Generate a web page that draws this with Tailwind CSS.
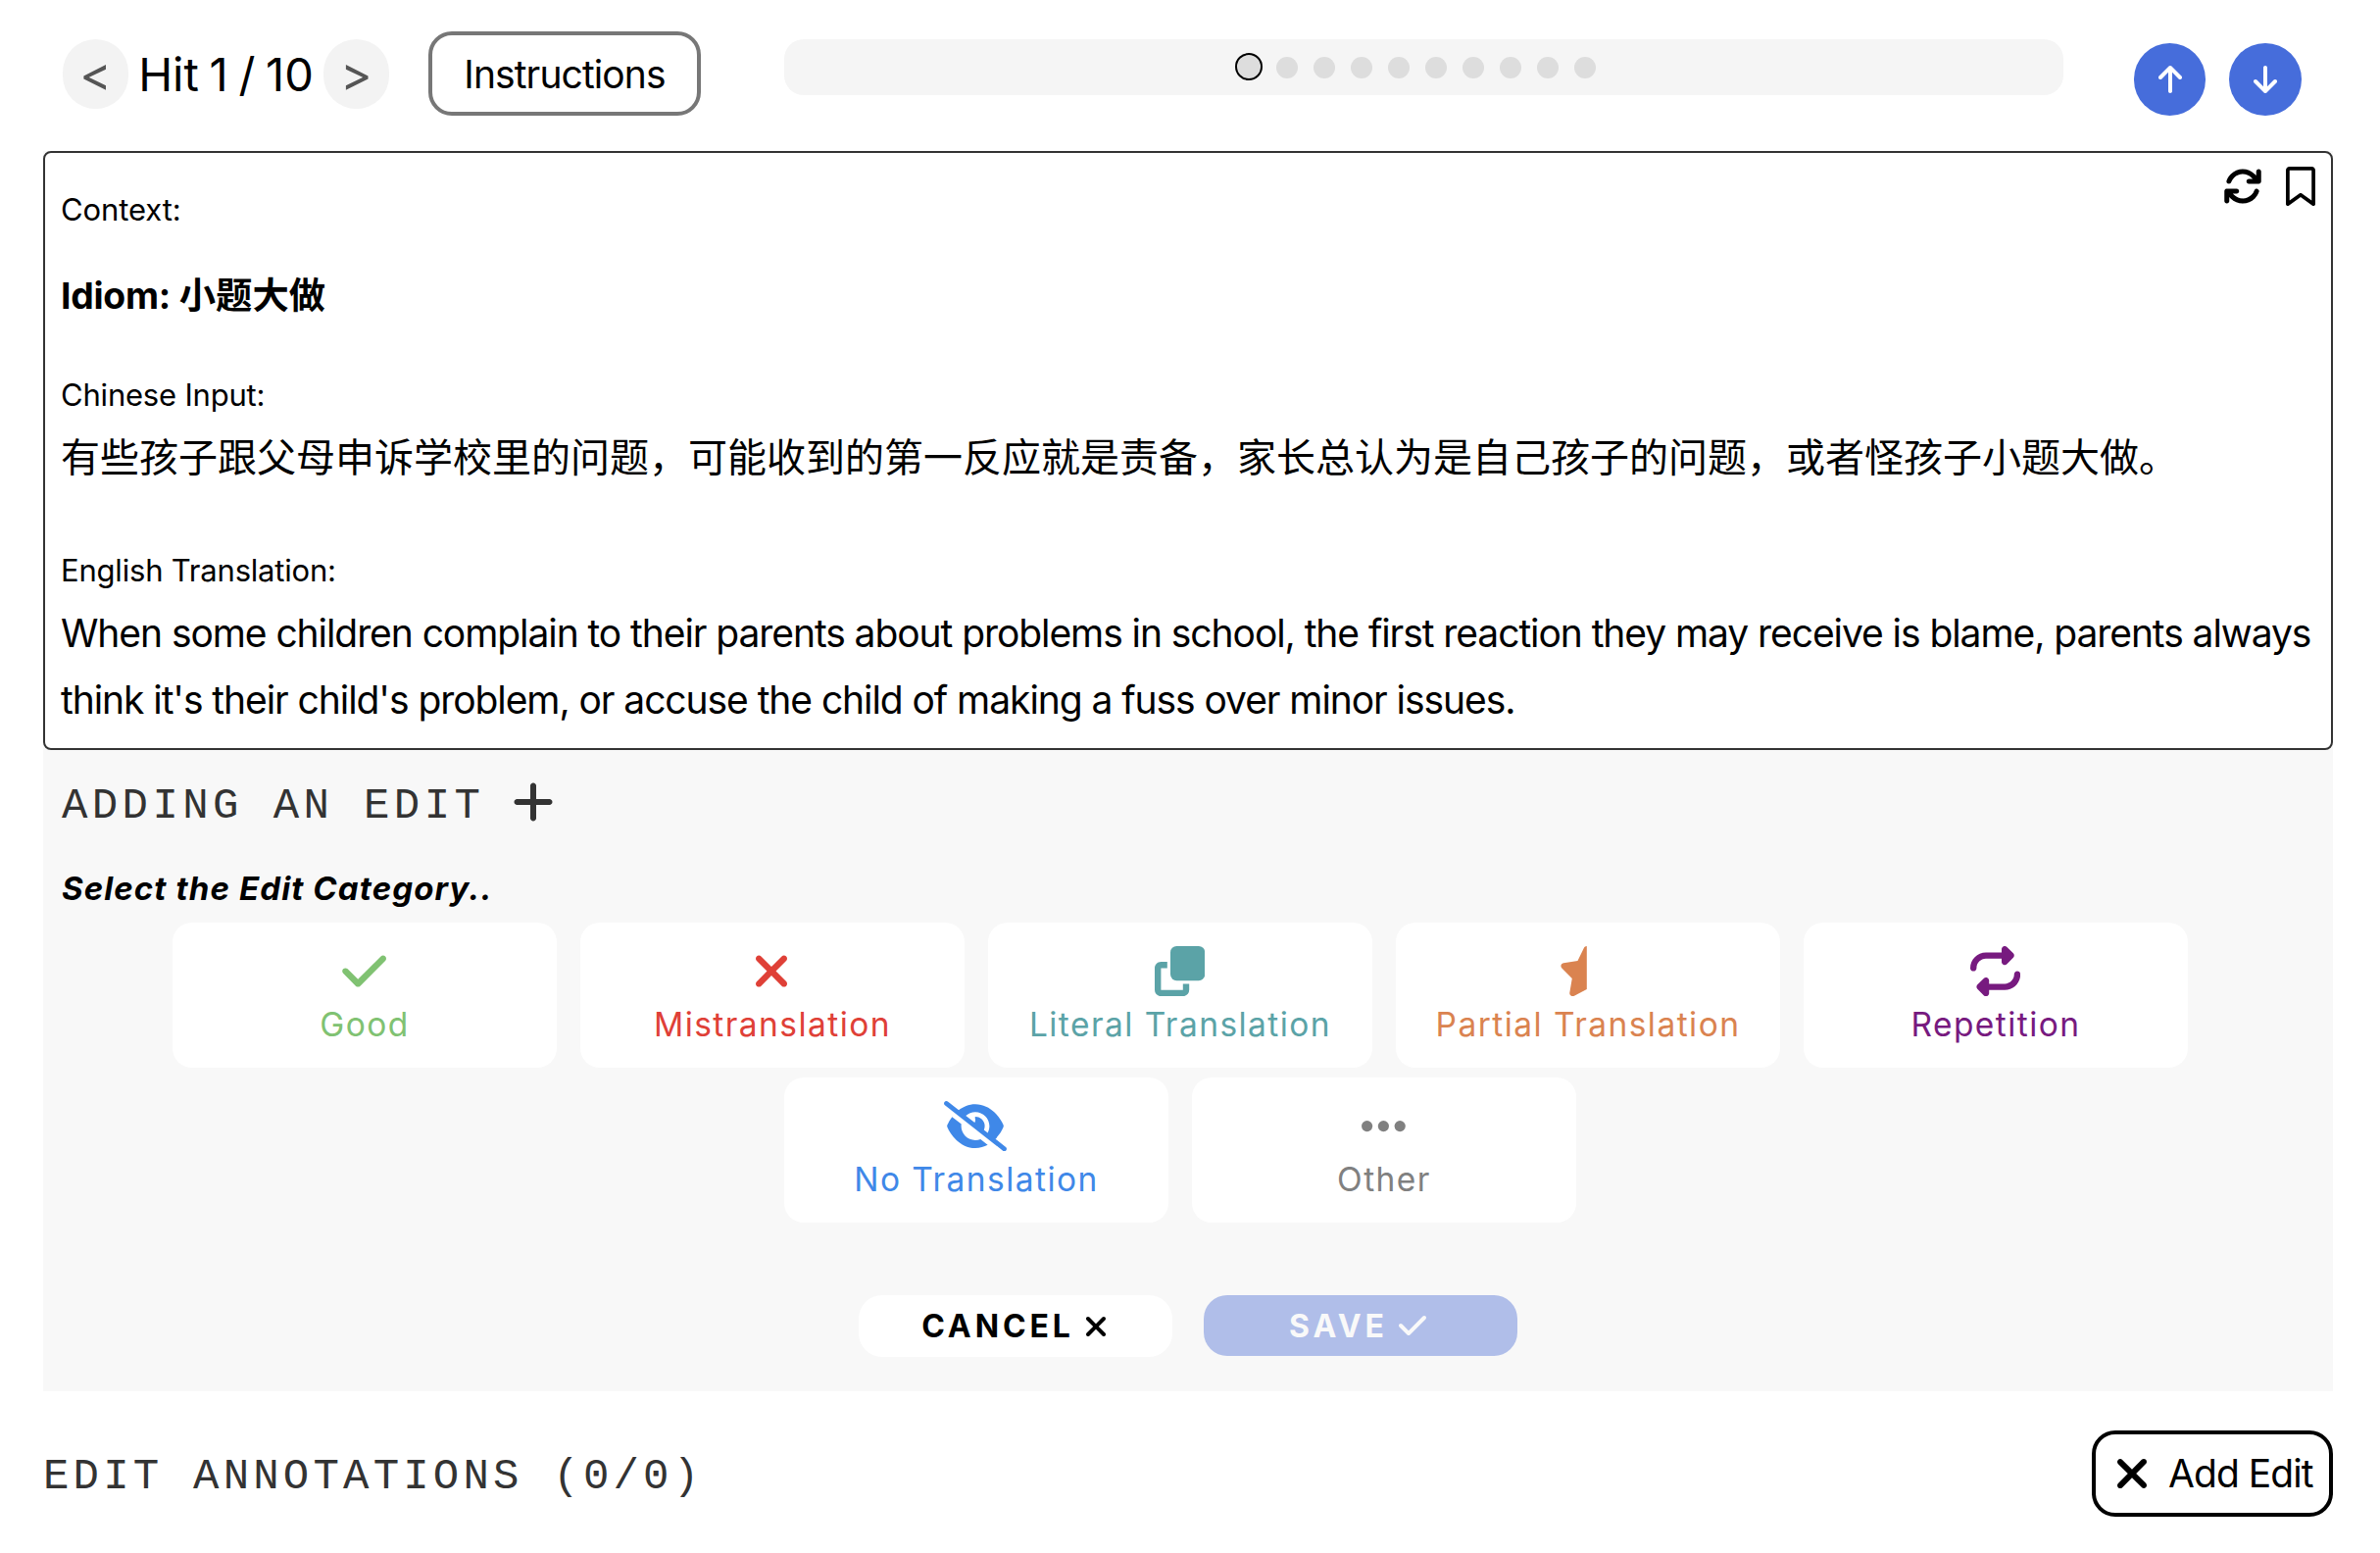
<!DOCTYPE html>
<html lang="en">
<head>
<meta charset="utf-8">
<title>Annotation</title>
<script src="https://cdn.jsdelivr.net/npm/@tailwindcss/browser@4"></script>
</head>
<body class="bg-white text-black font-['Inter','Noto_Sans_CJK_SC',sans-serif]">
<div class="w-[2428px] h-[1584px] overflow-hidden pl-[44px] pr-[48px] flex flex-col whitespace-nowrap">

  <!-- Top bar -->
  <header class="h-[154px] flex items-start shrink-0">
    <div class="flex items-center h-[71px] mt-[40px] ml-[20px]">
      <button class="w-[67px] h-[71px] rounded-full bg-[#f3f3f3] text-[#555] text-[49px] leading-[71px] text-center">&lt;</button>
      <h1 class="w-[199px] text-center text-[47px] leading-[71px] [word-spacing:-2.5px]">Hit 1 / 10</h1>
      <button class="w-[67px] h-[71px] rounded-full bg-[#f3f3f3] text-[#555] text-[49px] leading-[71px] text-center">&gt;</button>
    </div>
    <button class="w-[278px] h-[86px] mt-[32px] ml-[40px] border-4 border-[#777] rounded-[24px] text-[39px] leading-[80px] tracking-[-0.9px]">Instructions</button>
    <div class="w-[1305px] h-[57px] mt-[40px] ml-[85px] rounded-[20px] bg-[#f5f5f5] flex pl-[460px]">
      <i class="size-[28px] mt-[14px] rounded-full border-[2.5px] border-black bg-[#ddd]"></i>
      <div class="flex gap-4 ml-[14px] mt-[18px]">
        <i class="size-[22px] rounded-full bg-[#ddd]"></i><i class="size-[22px] rounded-full bg-[#ddd]"></i><i class="size-[22px] rounded-full bg-[#ddd]"></i><i class="size-[22px] rounded-full bg-[#ddd]"></i><i class="size-[22px] rounded-full bg-[#ddd]"></i><i class="size-[22px] rounded-full bg-[#ddd]"></i><i class="size-[22px] rounded-full bg-[#ddd]"></i><i class="size-[22px] rounded-full bg-[#ddd]"></i><i class="size-[22px] rounded-full bg-[#ddd]"></i>
      </div>
    </div>
    <div class="flex gap-[24px] ml-[72px] mt-[44px] text-white">
      <button class="w-[73px] h-[74px] rounded-full bg-[#466ddb] flex items-center justify-center"><svg class="w-6 h-8" viewBox="0 0 384 512" fill="currentColor"><path d="M214.6 41.4c-12.5-12.5-32.8-12.5-45.3 0l-160 160c-12.5 12.5-12.5 32.8 0 45.3s32.8 12.5 45.3 0L160 141.2V448c0 17.7 14.3 32 32 32s32-14.3 32-32V141.2L329.4 246.6c12.5 12.5 32.8 12.5 45.3 0s12.5-32.8 0-45.3l-160-160z"/></svg></button>
      <button class="w-[74px] h-[74px] rounded-full bg-[#466ddb] flex items-center justify-center"><svg class="w-6 h-8 rotate-180" viewBox="0 0 384 512" fill="currentColor"><path d="M214.6 41.4c-12.5-12.5-32.8-12.5-45.3 0l-160 160c-12.5 12.5-12.5 32.8 0 45.3s32.8 12.5 45.3 0L160 141.2V448c0 17.7 14.3 32 32 32s32-14.3 32-32V141.2L329.4 246.6c12.5 12.5 32.8 12.5 45.3 0s12.5-32.8 0-45.3l-160-160z"/></svg></button>
    </div>
  </header>

  <!-- Passage box -->
  <div class="bg-[#f8f8f8] shrink-0">
    <section class="relative h-[611px] border-2 border-[#333] rounded-[8px] bg-white pl-4 pt-[34px]">
      <div class="absolute right-[16px] top-[14px] flex gap-[24px] items-center">
        <svg class="size-10" viewBox="0 0 512 512"><path d="M105.1 202.6c7.7-21.8 20.2-42.3 37.8-59.8c62.5-62.5 163.8-62.5 226.3 0L386.3 160H336c-17.7 0-32 14.3-32 32s14.3 32 32 32H463.5c0 0 0 0 0 0h.4c17.7 0 32-14.3 32-32V64c0-17.7-14.3-32-32-32s-32 14.3-32 32v51.2L414.4 97.6c-87.5-87.5-229.3-87.5-316.8 0C73.2 122 55.6 150.7 44.8 181.4c-5.9 16.7 2.9 34.9 19.5 40.8s34.9-2.9 40.8-19.5zM39 289.3c-5 1.5-9.8 4.2-13.7 8.2c-4 4-6.7 8.8-8.1 14c-.3 1.2-.6 2.5-.8 3.8c-.3 1.7-.4 3.4-.4 5.1V448c0 17.7 14.3 32 32 32s32-14.3 32-32V396.9l17.6 17.5 0 0c87.5 87.4 229.3 87.4 316.7 0c24.4-24.4 42.1-53.1 52.9-83.7c5.9-16.7-2.9-34.9-19.5-40.8s-34.9 2.9-40.8 19.5c-7.7 21.8-20.2 42.3-37.8 59.8c-62.5 62.5-163.8 62.5-226.3 0l-.1-.1L125.6 352H176c17.7 0 32-14.3 32-32s-14.3-32-32-32H48.4c-1.6 0-3.2 .1-4.8 .3s-3.1 .5-4.6 1z"/></svg>
        <svg class="w-[30px] h-10" viewBox="0 0 384 512"><path d="M0 48C0 21.5 21.5 0 48 0l0 48V441.4l130.1-92.9c8.3-6 19.6-6 27.9 0L336 441.4V48H48V0H336c26.5 0 48 21.5 48 48V488c0 9-5 17.2-13 21.3s-17.6 3.4-24.9-1.8L192 397.5 37.9 507.5c-7.3 5.2-16.9 5.9-24.9 1.8S0 497 0 488V48z"/></svg>
      </div>
      <p class="text-[31px] leading-[48px] tracking-[-0.1px]">Context:</p>
      <h2 class="mt-[36px] text-[37.3px] leading-[56px] font-bold"><span class="tracking-[-0.25px]">Idiom:</span> 小题大做</h2>
      <p class="mt-[49px] text-[31px] leading-[48px] tracking-[-0.2px]">Chinese Input:</p>
      <p class="mt-[6px] text-[40px] leading-[68px]">有些孩子跟父母申诉学校里的问题，可能收到的第一反应就是责备，家长总认为是自己孩子的问题，或者怪孩子小题大做。</p>
      <p class="mt-[57px] text-[31px] leading-[48px] tracking-[-0.2px]">English Translation:</p>
      <p class="mt-[6px] text-[39px] leading-[68px] tracking-[-1.07px]">When some children complain to their parents about problems in school, the first reaction they may receive is blame, parents always<br>think it's their child's problem, or accuse the child of making a fuss over minor issues.</p>
    </section>

    <!-- Edit panel -->
    <section class="h-[654px] pt-[21px]">
      <div class="pl-[19px] flex text-[#333] h-[64px]">
        <h3 class="mt-[4px] font-['Liberation_Mono',monospace] text-[44px] leading-[64px] tracking-[4.4px]">ADDING AN EDIT</h3>
        <svg class="ml-[29px] mt-[8px] w-[42px] h-[48px]" viewBox="0 0 448 512" fill="currentColor"><path d="M432 256c0 17.7-14.3 32-32 32H256v144c0 17.7-14.3 32-32 32s-32-14.3-32-32V288H48c-17.7 0-32-14.3-32-32s14.3-32 32-32H192V80c0-17.7 14.3-32 32-32s32 14.3 32 32v144h144c17.7 0 32 14.3 32 32z"/></svg>
      </div>
      <p class="pl-[19px] mt-[32px] text-[33px] leading-[48px] font-bold italic tracking-[1.1px]">Select the Edit Category..</p>
      <div class="mt-[11px] ml-[132px] w-[2056px] flex flex-wrap justify-center gap-x-[24px] gap-y-[10px] text-[33.5px] leading-[44px] tracking-[1.45px]">
        <button class="w-[392px] h-[148px] pt-[24px] rounded-[20px] bg-white text-[#80c272] flex flex-col items-center"><svg class="size-[51.2px] mr-[1.5px]" viewBox="0 0 512 512" fill="currentColor"><path d="M470.6 105.4c12.5 12.5 12.5 32.8 0 45.3l-256 256c-12.5 12.5-32.8 12.5-45.3 0l-128-128c-12.5-12.5-12.5-32.8 0-45.3s32.8-12.5 45.3 0L192 338.7 425.4 105.4c12.5-12.5 32.8-12.5 45.3 0z"/></svg><span class="mt-[7px]">Good</span></button>
        <button class="w-[392px] h-[148px] pt-[24px] rounded-[20px] bg-white text-[#df4037] flex flex-col items-center"><svg class="w-[32px] h-[51.2px] mr-[1.5px]" viewBox="0 0 320 512" fill="currentColor"><path d="M310.6 150.6c12.5-12.5 12.5-32.8 0-45.3s-32.8-12.5-45.3 0L160 210.7 54.6 105.4c-12.5-12.5-32.8-12.5-45.3 0s-12.5 32.8 0 45.3L114.7 256 9.4 361.4c-12.5 12.5-12.5 32.8 0 45.3s32.8 12.5 45.3 0L160 301.3 265.4 406.6c12.5 12.5 32.8 12.5 45.3 0s12.5-32.8 0-45.3L205.3 256 310.6 150.6z"/></svg><span class="mt-[7px]">Mistranslation</span></button>
        <button class="w-[392px] h-[148px] pt-[24px] rounded-[20px] bg-white text-[#5ba3a7] flex flex-col items-center"><svg class="size-[51.2px] mr-[1.5px]" viewBox="0 0 512 512" fill="currentColor"><rect x="160" width="352" height="352" rx="64"/><path d="M0 224c0-35.3 28.7-64 64-64h64v64H64v224h224v-64h64v64c0 35.3-28.7 64-64 64H64c-35.3 0-64-28.7-64-64z"/></svg><span class="mt-[7px]">Literal Translation</span></button>
        <button class="w-[392px] h-[148px] pt-[24px] rounded-[20px] bg-white text-[#da8350] flex flex-col items-center"><svg class="w-[57.6px] h-[51.2px] mr-[1.5px]" viewBox="0 0 576 512" fill="currentColor"><path d="M288 0c-12.2.1-23.3 7-28.6 18L195 150.3 51.4 171.5c-12 1.8-22 10.2-25.7 21.7s-.7 24.2 7.9 32.7L137.8 329 113.2 474.7c-2 12 3 24.2 12.9 31.3s23 8 33.8 2.3L288 439.8V0z"/></svg><span class="mt-[7px]">Partial Translation</span></button>
        <button class="w-[392px] h-[148px] pt-[24px] rounded-[20px] bg-white text-[#771a7f] flex flex-col items-center"><svg class="size-[51.2px] mr-[1.5px]" viewBox="0 0 512 512" fill="currentColor"><path d="M0 224c0 17.7 14.3 32 32 32s32-14.3 32-32c0-53 43-96 96-96H320v32c0 12.9 7.8 24.6 19.8 29.6s25.7 2.2 34.9-6.9l64-64c12.5-12.5 12.5-32.8 0-45.3l-64-64c-9.2-9.2-22.9-11.9-34.9-6.9S320 19.1 320 32V64H160C71.6 64 0 135.6 0 224zm512 64c0-17.7-14.3-32-32-32s-32 14.3-32 32c0 53-43 96-96 96H192V352c0-12.9-7.8-24.6-19.8-29.6s-25.7-2.2-34.9 6.9l-64 64c-12.5 12.5-12.5 32.8 0 45.3l64 64c9.2 9.2 22.9 11.9 34.9 6.9s19.8-16.6 19.8-29.6V448H352c88.4 0 160-71.6 160-160z"/></svg><span class="mt-[7px]">Repetition</span></button>
        <button class="w-[392px] h-[148px] pt-[24px] rounded-[20px] bg-white text-[#3f88e8] flex flex-col items-center"><svg class="w-[64px] h-[51.2px] mr-[1.5px]" viewBox="0 0 640 512" fill="currentColor"><path d="M38.8 5.1C28.4-3.1 13.3-1.2 5.1 9.2S-1.2 34.7 9.2 42.9l592 464c10.4 8.2 25.5 6.3 33.7-4.1s6.3-25.5-4.1-33.7L525.6 386.7c39.6-40.6 66.4-86.1 79.9-118.4c3.3-7.9 3.3-16.7 0-24.6c-14.9-35.7-46.2-87.7-93-131.1C465.5 68.8 400.8 32 320 32c-68.2 0-125 26.3-169.3 60.8L38.8 5.1zM223.1 149.5C248.6 126.2 282.7 112 320 112c79.5 0 144 64.5 144 144c0 24.9-6.3 48.3-17.4 68.7L408 294.5c8.4-19.3 10.6-41.4 4.8-63.3c-11.1-41.5-47.8-69.4-88.6-71.1c-5.8-.2-9.2 6.1-7.4 11.7c2.1 6.4 3.3 13.2 3.3 20.3c0 10.2-2.4 19.8-6.6 28.3l-90.3-70.8zM373 389.9c-16.4 6.5-34.3 10.1-53 10.1c-79.5 0-144-64.5-144-144c0-6.9 .5-13.6 1.4-20.2L83.1 161.5C60.3 191.2 44 220.8 34.5 243.7c-3.3 7.9-3.3 16.7 0 24.6c14.9 35.7 46.2 87.7 93 131.1C174.5 443.2 239.2 480 320 480c47.8 0 89.9-12.9 126.2-32.5L373 389.9z"/></svg><span class="mt-[7px]">No Translation</span></button>
        <button class="w-[392px] h-[148px] pt-[24px] rounded-[20px] bg-white text-[#808080] flex flex-col items-center"><svg class="w-[44.8px] h-[51.2px] mr-[1.5px]" viewBox="0 0 448 512" fill="currentColor"><circle cx="56" cy="256" r="56"/><circle cx="224" cy="256" r="56"/><circle cx="392" cy="256" r="56"/></svg><span class="mt-[7px]">Other</span></button>
      </div>
      <div class="mt-[74px] flex justify-center gap-[32px] text-[32px] leading-[63px] font-bold tracking-[3.9px]">
        <button class="w-[320px] h-[63px] rounded-[24px] bg-white flex items-center justify-center pr-[4px]">CANCEL<svg class="ml-[12px] w-5 h-8" viewBox="0 0 320 512" fill="currentColor"><path d="M310.6 150.6c12.5-12.5 12.5-32.8 0-45.3s-32.8-12.5-45.3 0L160 210.7 54.6 105.4c-12.5-12.5-32.8-12.5-45.3 0s-12.5 32.8 0 45.3L114.7 256 9.4 361.4c-12.5 12.5-12.5 32.8 0 45.3s32.8 12.5 45.3 0L160 301.3 265.4 406.6c12.5 12.5 32.8 12.5 45.3 0s12.5-32.8 0-45.3L205.3 256 310.6 150.6z"/></svg></button>
        <button class="w-[320px] h-[62px] rounded-[24px] bg-[#b0bee9] text-[#f9f9f9] flex items-center justify-center pr-[4px]">SAVE<svg class="ml-[9px] size-8" viewBox="0 0 512 512" fill="currentColor"><path d="M470.6 105.4c12.5 12.5 12.5 32.8 0 45.3l-256 256c-12.5 12.5-32.8 12.5-45.3 0l-128-128c-12.5-12.5-12.5-32.8 0-45.3s32.8-12.5 45.3 0L192 338.7 425.4 105.4c12.5-12.5 32.8-12.5 45.3 0z"/></svg></button>
      </div>
    </section>
  </div>

  <!-- Annotations list header -->
  <footer class="pt-[40px] flex justify-between">
    <h3 class="mt-[3px] text-[#333] font-['Liberation_Mono',monospace] text-[44px] leading-[88px] tracking-[4.2px]">EDIT ANNOTATIONS (0/0)</h3>
    <button class="w-[246px] h-[88px] border-4 rounded-[24px] flex items-center pl-[22px] text-[39px] leading-[80px] tracking-[-0.95px]"><svg class="w-[30px] h-12" viewBox="0 0 320 512"><path d="M310.6 150.6c12.5-12.5 12.5-32.8 0-45.3s-32.8-12.5-45.3 0L160 210.7 54.6 105.4c-12.5-12.5-32.8-12.5-45.3 0s-12.5 32.8 0 45.3L114.7 256 9.4 361.4c-12.5 12.5-12.5 32.8 0 45.3s32.8 12.5 45.3 0L160 301.3 265.4 406.6c12.5 12.5 32.8 12.5 45.3 0s12.5-32.8 0-45.3L205.3 256 310.6 150.6z"/></svg><span class="ml-[22px]">Add Edit</span></button>
  </footer>
</div>
</body>
</html>
